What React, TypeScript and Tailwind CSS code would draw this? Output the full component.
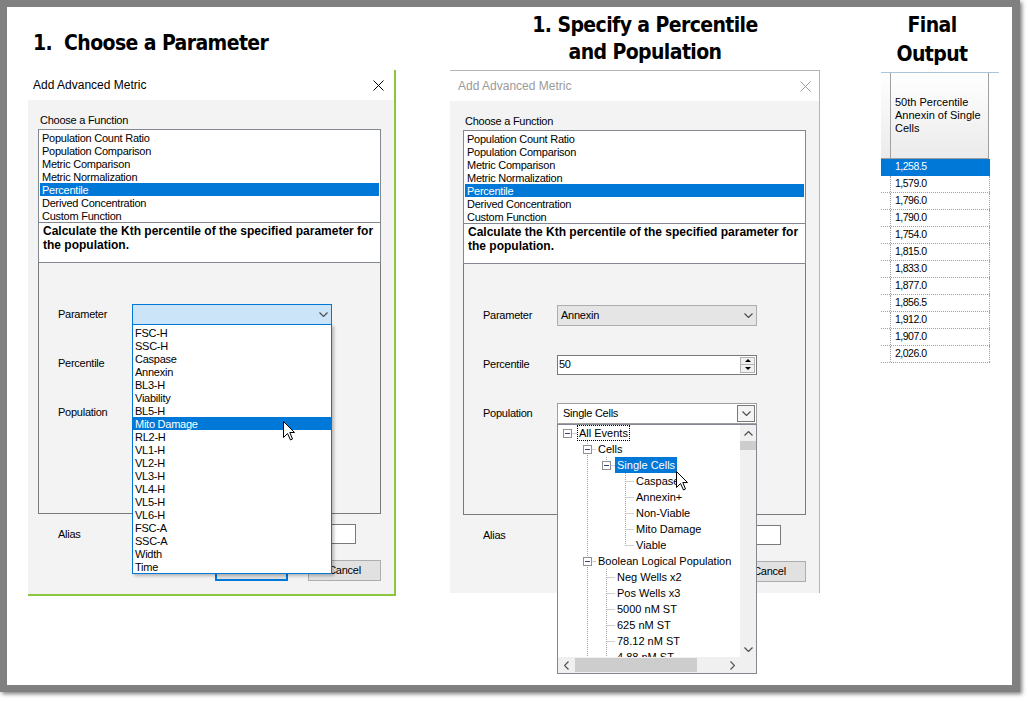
import clsx from "clsx";

const ui = "font-['Liberation_Sans',Arial,sans-serif]";
const small = "text-[11px] tracking-[-0.25px]";
const heading =
  "font-['DejaVu_Sans_Condensed','DejaVu_Sans',sans-serif] [font-stretch:condensed] font-bold text-[21px] tracking-[-0.6px] text-black whitespace-nowrap";

const functions = [
  "Population Count Ratio",
  "Population Comparison",
  "Metric Comparison",
  "Metric Normalization",
  "Percentile",
  "Derived Concentration",
  "Custom Function",
];

const parameters = [
  "FSC-H", "SSC-H", "Caspase", "Annexin", "BL3-H", "Viability", "BL5-H",
  "Mito Damage", "RL2-H", "VL1-H", "VL2-H", "VL3-H", "VL4-H", "VL5-H",
  "VL6-H", "FSC-A", "SSC-A", "Width", "Time",
];

const values = [
  "1,258.5", "1,579.0", "1,796.0", "1,790.0", "1,754.0", "1,815.0",
  "1,833.0", "1,877.0", "1,856.5", "1,912.0", "1,907.0", "2,026.0",
];

type TreeRow = { label: string; level: number; box?: boolean; selected?: boolean; focus?: boolean };

const tree: TreeRow[] = [
  { label: "All Events", level: 0, box: true, focus: true },
  { label: "Cells", level: 1, box: true },
  { label: "Single Cells", level: 2, box: true, selected: true },
  { label: "Caspase+", level: 3 },
  { label: "Annexin+", level: 3 },
  { label: "Non-Viable", level: 3 },
  { label: "Mito Damage", level: 3 },
  { label: "Viable", level: 3 },
  { label: "Boolean Logical Population", level: 1, box: true },
  { label: "Neg Wells x2", level: 2 },
  { label: "Pos Wells x3", level: 2 },
  { label: "5000 nM ST", level: 2 },
  { label: "625 nM ST", level: 2 },
  { label: "78.12 nM ST", level: 2 },
  { label: "4.88 nM ST", level: 2 },
];

// spacer widths so text starts at the right column for each level
const indent = ["w-[19px]", "w-[38px]", "w-[57px]", "w-[76px]"];
const lineX = [9, 29, 48, 67];
const textX = [19, 38, 57, 76];

const Chevron = ({ dir = "down" }: { dir?: "down" | "up" | "left" | "right" }) => {
  const d = {
    down: "M0.5 0.5 L4.5 4.5 L8.5 0.5",
    up: "M0.5 4.5 L4.5 0.5 L8.5 4.5",
    left: "M4.5 0.5 L0.5 4.5 L4.5 8.5",
    right: "M0.5 0.5 L4.5 4.5 L0.5 8.5",
  }[dir];
  const horiz = dir === "left" || dir === "right";
  return (
    <svg width={horiz ? 5 : 9} height={horiz ? 9 : 5} viewBox={horiz ? "0 0 5 9" : "0 0 9 5"}>
      <path d={d} fill="none" stroke="#505050" strokeWidth="1.2" />
    </svg>
  );
};

const CloseIcon = ({ color }: { color: string }) => (
  <svg width="11" height="11" viewBox="0 0 11 11">
    <path d="M0.5 0.5 L10.5 10.5 M10.5 0.5 L0.5 10.5" stroke={color} strokeWidth="1" />
  </svg>
);

const Cursor = ({ className }: { className: string }) => (
  <svg width="13" height="20" viewBox="0 0 13 20" className={clsx("absolute z-20", className)}>
    <path
      d="M0.5 0.5 V16.5 L4.5 12.5 L7.5 19 L9.5 18 L6.8 11.5 H11.5 Z"
      fill="white"
      stroke="black"
      strokeWidth="1"
    />
  </svg>
);

const Row = ({ label, children }: { label: string; children: React.ReactNode }) => (
  <div className="flex items-center h-[21px]">
    <span className="w-[74px]">{label}</span>
    {children}
  </div>
);

function ParamList() {
  return (
    <div className="absolute left-[93px] top-[61px] z-10 w-[200px] h-[250px] border border-[#0078d7] bg-white py-[1px] leading-[13px] shadow-[2px_2px_3px_rgba(0,0,0,0.25)]">
      {parameters.map((p) => (
        <div
          key={p}
          className={clsx("h-[13px] pl-[2px] pt-[1px] whitespace-nowrap", p === "Mito Damage" && "bg-[#0078d7] text-white")}
        >
          {p}
        </div>
      ))}
    </div>
  );
}

function TreeLines() {
  const cy = (i: number) => 16 * i + 8.5;
  return (
    <svg className="absolute left-0 top-0" width="182" height="240">
      <g stroke="#a0a0a0" strokeDasharray="1 1" fill="none">
        {tree.map((r, i) => (
          <line key={i} x1={lineX[r.level] + 0.5} x2={textX[r.level]} y1={cy(i)} y2={cy(i)} />
        ))}
        <line x1={29.5} x2={29.5} y1={16} y2={240} />
        <line x1={48.5} x2={48.5} y1={32} y2={40} />
        <line x1={67.5} x2={67.5} y1={48} y2={cy(7)} />
        <line x1={48.5} x2={48.5} y1={144} y2={240} />
      </g>
      {tree.map((r, i) =>
        r.box ? (
          <g key={"b" + i}>
            <rect
              x={lineX[r.level] - 4 + 0.5}
              y={16 * i + 4.5}
              width="8"
              height="8"
              fill="white"
              stroke="#919191"
            />
            <line
              x1={lineX[r.level] - 2}
              x2={lineX[r.level] + 3}
              y1={cy(i)}
              y2={cy(i)}
              stroke="#34448a"
            />
          </g>
        ) : null
      )}
    </svg>
  );
}

function PopTree() {
  return (
    <div className="absolute left-[93px] top-[160px] z-10 w-[200px] h-[250px] border border-[#828790] bg-white flex flex-col text-[11px] tracking-normal">
      <div className="flex flex-1 min-h-0">
        <div className="relative flex-1 overflow-hidden">
          {tree.map((r, i) => (
            <div key={i} className="h-[16px] flex items-center whitespace-nowrap leading-[16px]">
              <div className={clsx("shrink-0", indent[r.level])} />
              <span
                className={clsx(
                  "px-[2px] h-[16px]",
                  r.selected && "bg-[#0078d7] text-white",
                  r.focus && "outline-1 outline-dotted outline-black -outline-offset-1"
                )}
              >
                {r.label}
              </span>
            </div>
          ))}
          <TreeLines />
        </div>
        <div className="w-[16px] bg-[#f0f0f0] flex flex-col">
          <div className="h-[16px] flex items-center justify-center">
            <Chevron dir="up" />
          </div>
          <div className="h-[9px] bg-[#cdcdcd]" />
          <div className="flex-1" />
          <div className="h-[16px] flex items-center justify-center">
            <Chevron dir="down" />
          </div>
        </div>
      </div>
      <div className="h-[16px] flex">
        <div className="flex-1 bg-[#f0f0f0] flex items-center">
          <div className="w-[16px] flex justify-center">
            <Chevron dir="left" />
          </div>
          <div className="ml-[1px] w-[122px] h-[14px] bg-[#cdcdcd]" />
          <div className="flex-1" />
          <div className="w-[16px] flex justify-center">
            <Chevron dir="right" />
          </div>
        </div>
        <div className="w-[16px] bg-[#f0f0f0]" />
      </div>
    </div>
  );
}

function Dialog({ active }: { active: boolean }) {
  return (
    <div
      className={clsx(
        "flex flex-col",
        active ? "border-r-2 border-b-2 border-[#8cc63f]" : "border-t border-r border-[#b5b5b5]"
      )}
    >
      <div
        className={clsx(
          "h-[30px] bg-white flex items-center justify-between text-[12px]",
          active ? "pl-[5px] pr-[10px] text-black" : "pl-[8px] pr-[8px] text-[#9a9a9a]"
        )}
      >
        <span>Add Advanced Metric</span>
        <CloseIcon color={active ? "#000000" : "#9a9a9a"} />
      </div>
      <div className={clsx("bg-[#f3f3f3] pt-[13px]", active ? "h-[494px] pl-[10px]" : "h-[492px] pl-[13px]")}>
        <div className={clsx("w-[343px] flex flex-col text-black", small)}>
          <div className="leading-[13px] pl-[2px] pt-[1px]">Choose a Function</div>
          <div className="mt-[2px] h-[94px] border border-[#828790] bg-white pt-[1px] px-[1px] leading-[13px]">
            {functions.map((f) => (
              <div
                key={f}
                className={clsx(
                  "h-[13px] pl-[2px] pt-[1px] whitespace-nowrap",
                  f === "Percentile" && "bg-[#0078d7] text-white"
                )}
              >
                {f}
              </div>
            ))}
          </div>
          <div className="h-[40px] border-x border-b border-[#828790] bg-white pl-[4px] pt-[2px] font-bold text-[12px] tracking-normal leading-[13.5px] whitespace-nowrap overflow-hidden">
            Calculate the Kth percentile of the specified parameter for
            <br />
            the population.
          </div>
          <div className="relative h-[251px] border-x border-b border-[#7a7a7a] pt-[41px] pl-[19px] flex flex-col gap-[28px]">
            <Row label="Parameter">
              {active ? (
                <div className="w-[200px] h-[21px] border border-[#0078d7] bg-[#cce4f7] flex items-center justify-end pr-[3px]">
                  <Chevron />
                </div>
              ) : (
                <div className="w-[200px] h-[21px] border border-[#adadad] bg-[#e5e5e5] flex items-center justify-between pl-[3px] pr-[3px]">
                  <span>Annexin</span>
                  <Chevron />
                </div>
              )}
            </Row>
            <Row label="Percentile">
              <div className="w-[200px] h-[20px] border border-[#7a7a7a] bg-white flex p-[1px]">
                <span className="flex-1 flex items-center">{active ? "" : "50"}</span>
                <div className="w-[15px] flex flex-col">
                  <div className="flex-1 bg-[#f0f0f0] border border-[#b4b4b4] flex items-center justify-center">
                    <div className="w-0 h-0 border-x-[3px] border-x-transparent border-b-[3px] border-b-black" />
                  </div>
                  <div className="flex-1 bg-[#f0f0f0] border-x border-b border-[#b4b4b4] flex items-center justify-center">
                    <div className="w-0 h-0 border-x-[3px] border-x-transparent border-t-[3px] border-t-black" />
                  </div>
                </div>
              </div>
            </Row>
            <Row label="Population">
              <div className="w-[200px] h-[21px] border border-[#a0a0a0] bg-white flex p-[1px]">
                <span className="flex-1 flex items-center pl-[4px]">{active ? "" : "Single Cells"}</span>
                <div className="w-[18px] border border-[#7a7a7a] bg-[#f4f4f4] flex items-center justify-center">
                  <Chevron />
                </div>
              </div>
            </Row>
            {active ? <ParamList /> : <PopTree />}
            <Cursor className={active ? "left-[244px] top-[158px]" : "left-[212px] top-[207px]"} />
          </div>
          <div className="mt-[10px] flex items-center h-[20px] pl-[20px]">
            <span className="w-[74px]">Alias</span>
            <div className="w-[224px] h-[20px] border border-[#7a7a7a] bg-white" />
          </div>
          <div className="mt-[16px] flex justify-end gap-[20px]">
            <div className="w-[73px] h-[21px] border-2 border-[#0078d7] bg-[#e1e1e1] flex items-center justify-center">
              {active ? "OK" : ""}
            </div>
            <div className="w-[73px] h-[21px] border border-[#adadad] bg-[#e1e1e1] flex items-center justify-center">
              Cancel
            </div>
          </div>
        </div>
      </div>
    </div>
  );
}

function OutputTable() {
  return (
    <div className="flex flex-col text-[11px] text-black">
      <div className="h-[1px] bg-[#a9c5dc]" />
      <div className="flex h-[86px]">
        <div className="w-[9px] bg-linear-to-b from-white to-[#ebebeb] border-b border-[#a0a0a0]" />
        <div className="w-[99px] bg-linear-to-b from-white to-[#ebebeb] border-x border-b border-[#a0a0a0] pl-[4px] flex items-center leading-[13px]">
          <div>
            50th Percentile
            <br />
            Annexin of Single
            <br />
            Cells
          </div>
        </div>
      </div>
      {values.map((v, i) => (
        <div
          key={v + i}
          className={clsx(
            "flex h-[17px] w-[109px] border-b border-dotted",
            i === 0 ? "bg-[#0078d7] text-white border-[#0078d7]" : "border-[#a0a0a0]"
          )}
        >
          <div className="w-[9px]" />
          <div
            className={clsx(
              "flex-1 border-x border-dotted pl-[4px] flex items-center text-[10.5px] tracking-[-0.5px]",
              i === 0 ? "border-[#0078d7]" : "border-[#a0a0a0]"
            )}
          >
            {v}
          </div>
        </div>
      ))}
    </div>
  );
}

export default function App() {
  return (
    <div className={clsx("w-[1028px] h-[701px] bg-white overflow-hidden", ui)}>
      <div className="w-[1020px] h-[692px] bg-[#808080] pl-[7px] pt-[7px] shadow-[2px_2px_4px_rgba(0,0,0,0.5)]">
        <div className="w-[1005px] h-[678px] bg-white flex items-start pl-[21px]">
          <div className="w-[368px] flex flex-col">
            <div className={clsx("h-[63px] pt-[22px] pl-[5px] leading-[28px]", heading)}>1.&nbsp; Choose a Parameter</div>
            <Dialog active />
          </div>
          <div className="ml-[54px] w-[370px] flex flex-col">
            <div className={clsx("h-[63px] pt-[5px] pl-[20px] text-center leading-[27px]", heading)}>
              1. Specify a Percentile
              <br />
              and Population
            </div>
            <Dialog active={false} />
          </div>
          <div className="ml-[61px] w-[118px] flex flex-col">
            <div className={clsx("h-[65px] pt-[4px] w-[102px] text-center leading-[29px]", heading)}>
              Final
              <br />
              Output
            </div>
            <OutputTable />
          </div>
        </div>
      </div>
    </div>
  );
}
